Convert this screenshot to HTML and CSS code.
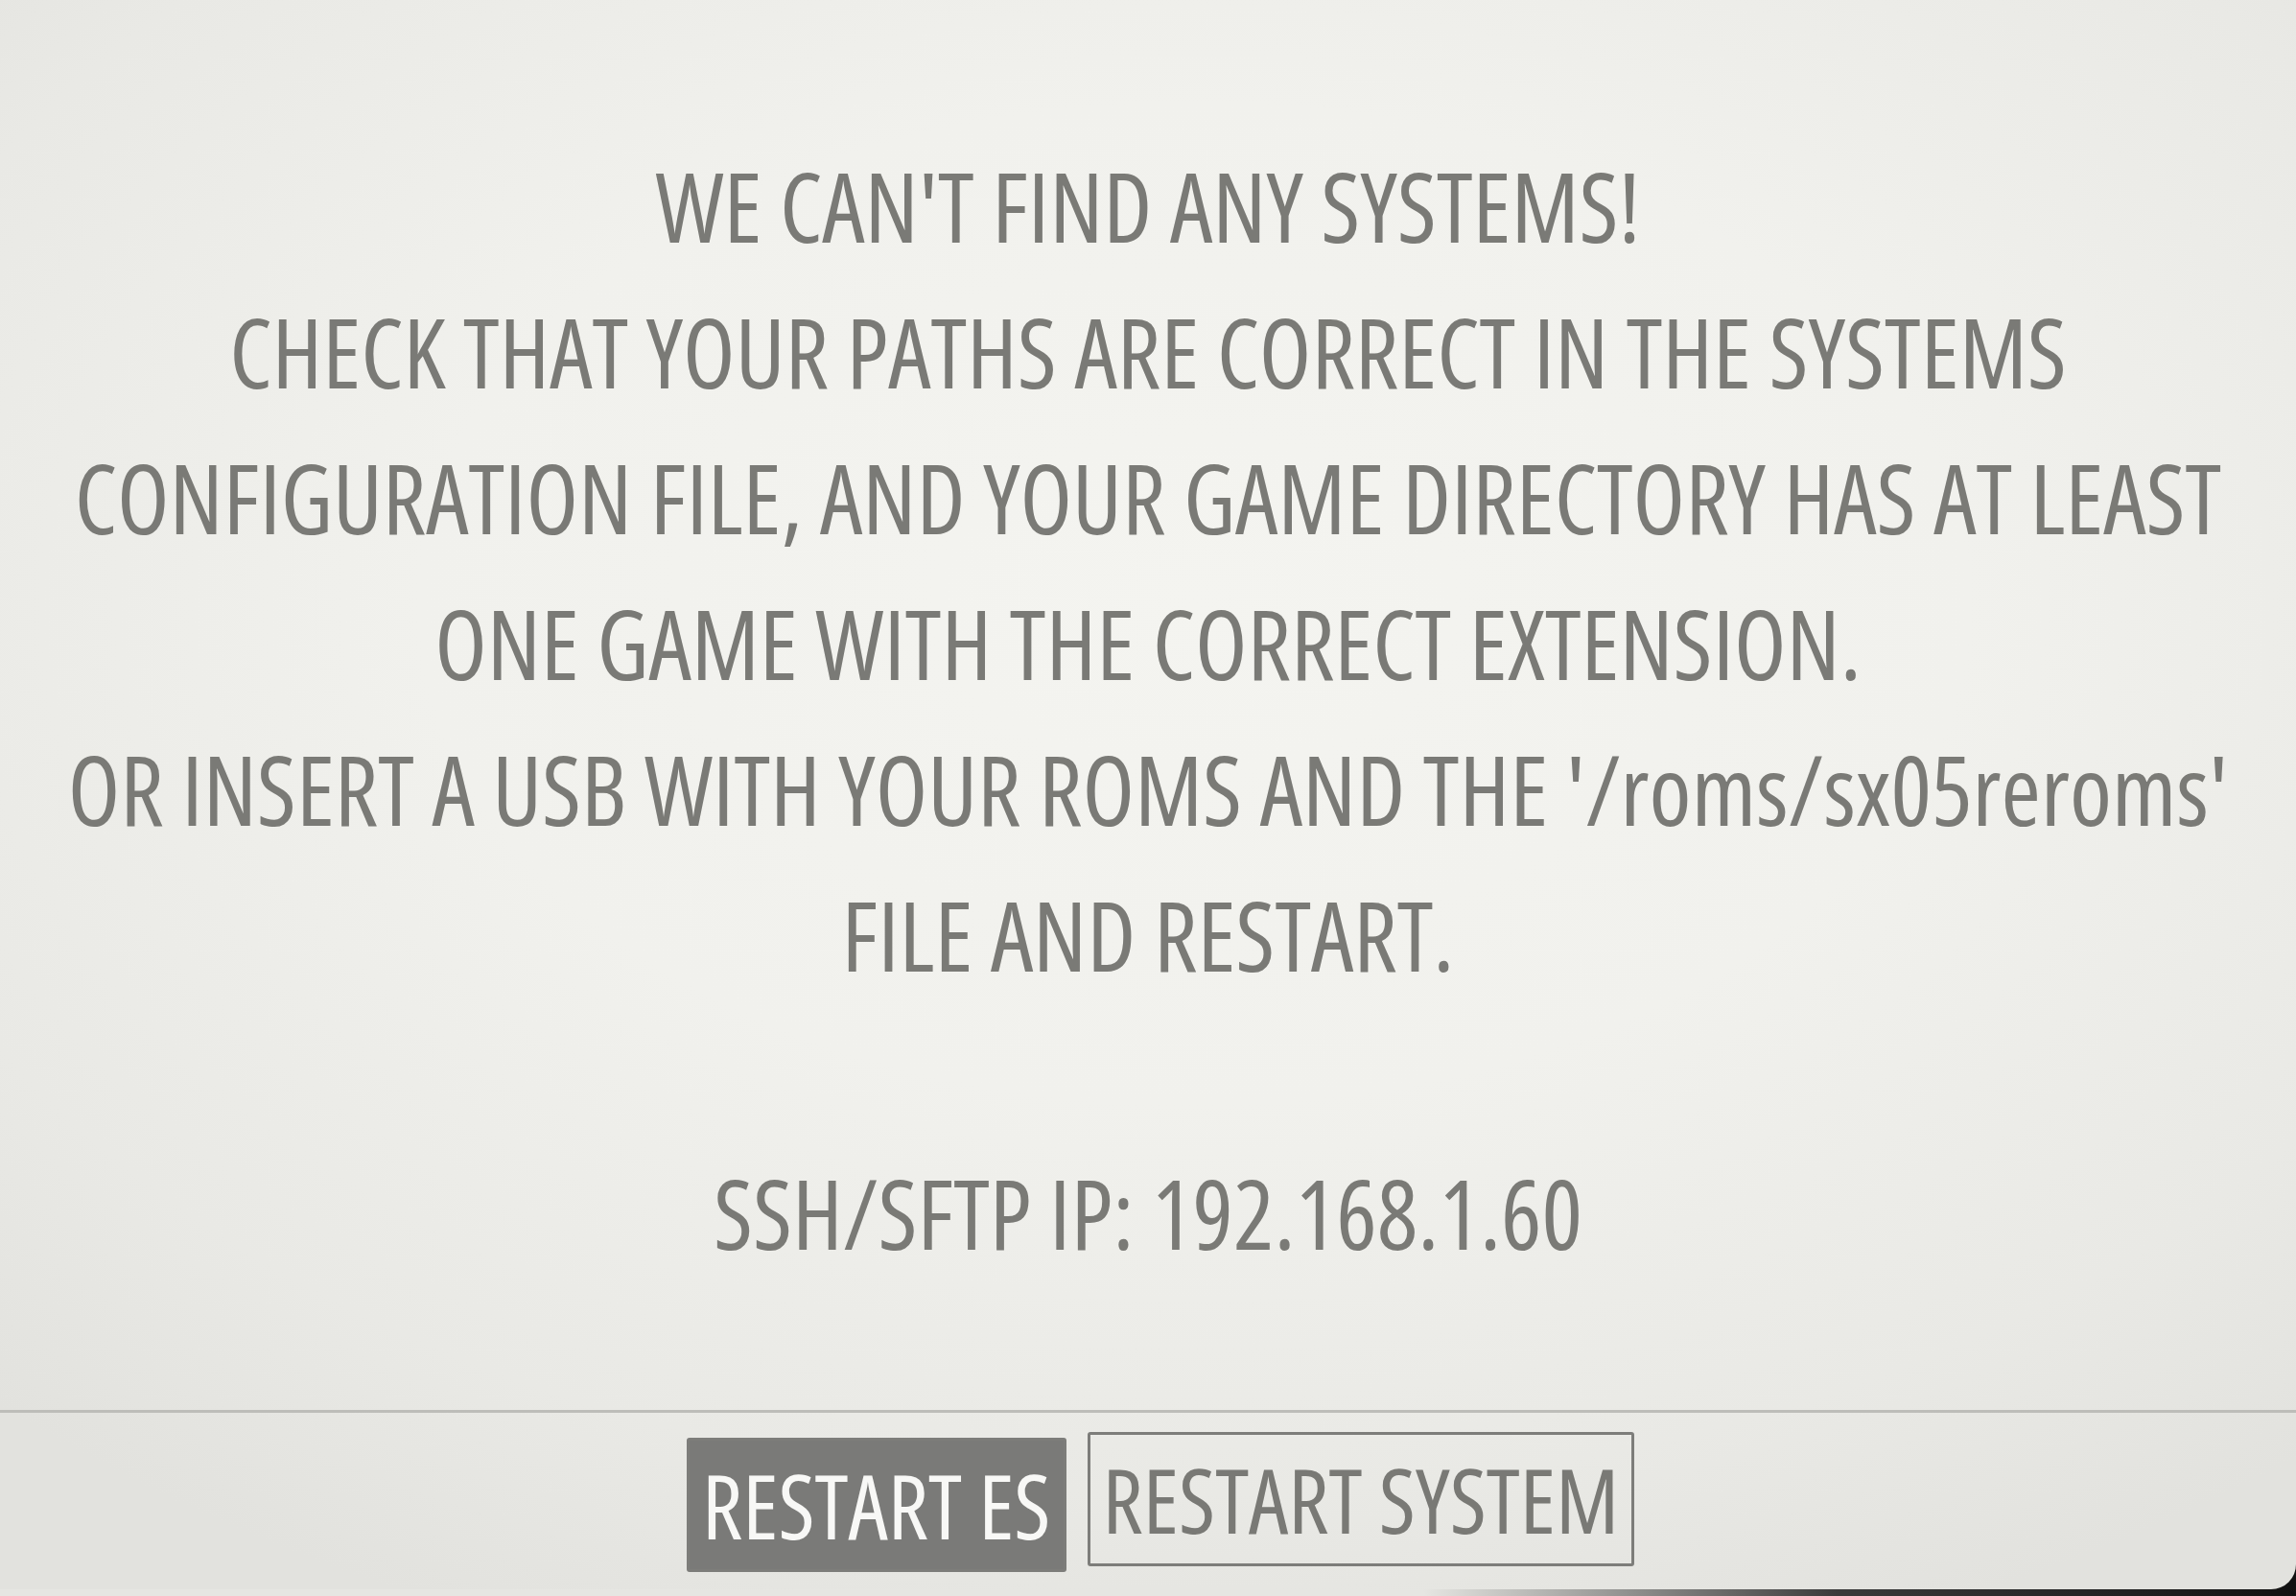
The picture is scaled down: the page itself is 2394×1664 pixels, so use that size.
FILE: index.html
```html
<!DOCTYPE html>
<html lang="en">
<head>
<meta charset="utf-8">
<title>No systems found</title>
<link rel="stylesheet" href="styles.css">
</head>
<body>
<main class="screen">
  <section class="message">
    <p class="line">WE CAN'T FIND ANY SYSTEMS!</p>
    <p class="line">CHECK THAT YOUR PATHS ARE CORRECT IN THE SYSTEMS</p>
    <p class="line">CONFIGURATION FILE, AND YOUR GAME DIRECTORY HAS AT LEAST</p>
    <p class="line">ONE GAME WITH THE CORRECT EXTENSION.</p>
    <p class="line">OR INSERT A USB WITH YOUR ROMS AND THE '/roms/sx05reroms'</p>
    <p class="line">FILE AND RESTART.</p>
    <p class="line ip">SSH/SFTP IP: 192.168.1.60</p>
  </section>
  <div class="separator"></div>
  <div class="buttons">
    <div class="btn btn-active">RESTART ES</div>
    <div class="btn">RESTART SYSTEM</div>
  </div>
</main>
</body>
</html>
```
FILE: styles.css
```css
html, body {
  margin: 0;
  padding: 0;
  height: 100%;
}
body {
  background: linear-gradient(to right, #e6e6e2 0%, #e6e6e2 62%, #3a3a3a 80%, #111 100%);
  overflow: hidden;
}
.screen {
  height: 1657px;
  display: flex;
  flex-direction: column;
  border-bottom-right-radius: 26px;
  background:
    radial-gradient(ellipse 75% 70% at 52% 38%, #f4f4f0 0%, #f1f1ed 45%, #e9e9e5 80%, #e2e2de 100%);
  font-family: "Open Sans", "Liberation Sans", sans-serif;
  font-weight: 400;
  font-stretch: 75%;
  color: #7a7a76;
}
.message {
  padding-top: 138px;
  text-align: center;
}
.line {
  margin: 0;
  font-size: 100px;
  line-height: 152px;
  height: 152px;
  white-space: nowrap;
}
.ip {
  margin-top: 138px;
}
.separator {
  margin-top: 130px;
  height: 3px;
  background: #bdbdb9;
}
.buttons {
  display: flex;
  justify-content: center;
  align-items: flex-start;
  gap: 22px;
  padding-left: 26px;
  margin-top: 20px;
}
.btn {
  height: 140px;
  box-sizing: border-box;
  padding: 0 13px;
  border: 3px solid #7d7d7a;
  border-radius: 3px;
  font-size: 93px;
  line-height: 134px;
  color: #797975;
  white-space: nowrap;
}
.btn-active {
  background: #7a7a78;
  color: #f8f8f6;
  margin-top: 6px;
}
```
